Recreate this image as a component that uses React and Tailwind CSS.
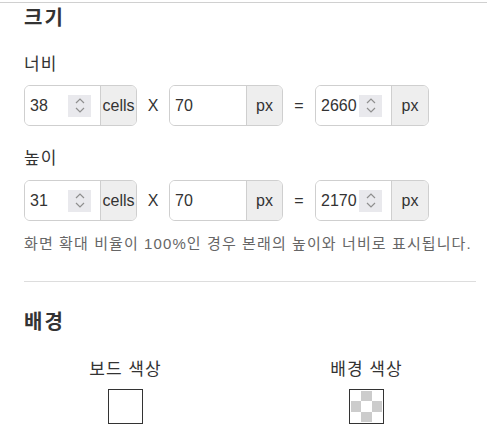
import React from "react";

const font = { fontFamily: '"Liberation Sans", "Noto Sans CJK KR", sans-serif' };

function Spinner() {
  return (
    <div className="w-[23px] h-[22px] bg-[#e9e9ed] flex flex-col items-center justify-center gap-[3px]">
      <svg width="10" height="6" viewBox="0 0 10 6" fill="none" stroke="#8f8f8f" strokeWidth="1.2">
        <path d="M1 5 L5 1 L9 5" />
      </svg>
      <svg width="10" height="6" viewBox="0 0 10 6" fill="none" stroke="#8f8f8f" strokeWidth="1.2">
        <path d="M1 1 L5 5 L9 1" />
      </svg>
    </div>
  );
}

function InputGroup({ value, unit, spinner, width, addon }) {
  return (
    <div className={`${width} flex h-[41px] border border-[#cfcfcf] rounded-[6px] overflow-hidden`}>
      <div className="flex-1 flex items-center justify-between pl-[5px] pr-[9px] bg-white">
        <span className="text-[16px] text-[#333]">{value}</span>
        {spinner && <Spinner />}
      </div>
      <div className={`${addon} flex items-center justify-center bg-[#eeeeee] border-l border-[#cfcfcf] text-[16px] text-[#333]`}>
        {unit}
      </div>
    </div>
  );
}

function SizeRow({ cells, px, total }) {
  return (
    <div className="flex items-center">
      <InputGroup value={cells} unit="cells" spinner width="w-[113px]" addon="w-[36px]" />
      <span className="w-[32px] text-center text-[16px] text-[#333]">X</span>
      <InputGroup value={px} unit="px" width="w-[114px]" addon="w-[36px]" />
      <span className="w-[32px] text-center text-[16px] text-[#333]">=</span>
      <InputGroup value={total} unit="px" spinner width="w-[114px]" addon="w-[37px]" />
    </div>
  );
}

export default function App() {
  return (
    <div className="w-[487px] h-[432px] bg-white overflow-hidden text-[#333]" style={font}>
      <div className="h-[2px]" />
      <div className="border-t border-[#d0d0d0]" />
      <div className="pl-6 pr-[11px]">
        <h2 className="text-[20px] leading-[24px] font-bold tracking-[2px] mt-[3px]">크기</h2>

        <div className="text-[17px] leading-[22px] tracking-[1px] mt-[24px]">너비</div>
        <div className="mt-[9px]">
          <SizeRow cells="38" px="70" total="2660" />
        </div>

        <div className="text-[17px] leading-[22px] tracking-[1px] mt-[22px]">높이</div>
        <div className="mt-[10px]">
          <SizeRow cells="31" px="70" total="2170" />
        </div>

        <p className="text-[15px] leading-[22px] tracking-[1.1px] text-[#666] mt-[12px]">
          화면 확대 비율이 100%인 경우 본래의 높이와 너비로 표시됩니다.
        </p>

        <div className="border-t border-[#dddddd] mt-[26px]" />

        <h2 className="text-[20px] leading-[24px] font-bold tracking-[2px] mt-[28px]">배경</h2>
      </div>

      <div className="flex pl-[5px] mt-[25px]">
        <div className="w-[242px] flex flex-col items-center">
          <span className="text-[17px] leading-[22px] tracking-[1px]">보드 색상</span>
          <div className="w-[35px] h-[35px] border border-[#333] bg-white mt-[8px]" />
        </div>
        <div className="w-[242px] flex flex-col items-center">
          <span className="text-[17px] leading-[22px] tracking-[1px]">배경 색상</span>
          <div className="w-[35px] h-[35px] border border-[#333] bg-white p-px mt-[8px] grid grid-cols-3 grid-rows-3">
            <div className="bg-white" />
            <div className="bg-[#cccccc]" />
            <div className="bg-white" />
            <div className="bg-[#cccccc]" />
            <div className="bg-white" />
            <div className="bg-[#cccccc]" />
            <div className="bg-white" />
            <div className="bg-[#cccccc]" />
            <div className="bg-white" />
          </div>
        </div>
      </div>
    </div>
  );
}
